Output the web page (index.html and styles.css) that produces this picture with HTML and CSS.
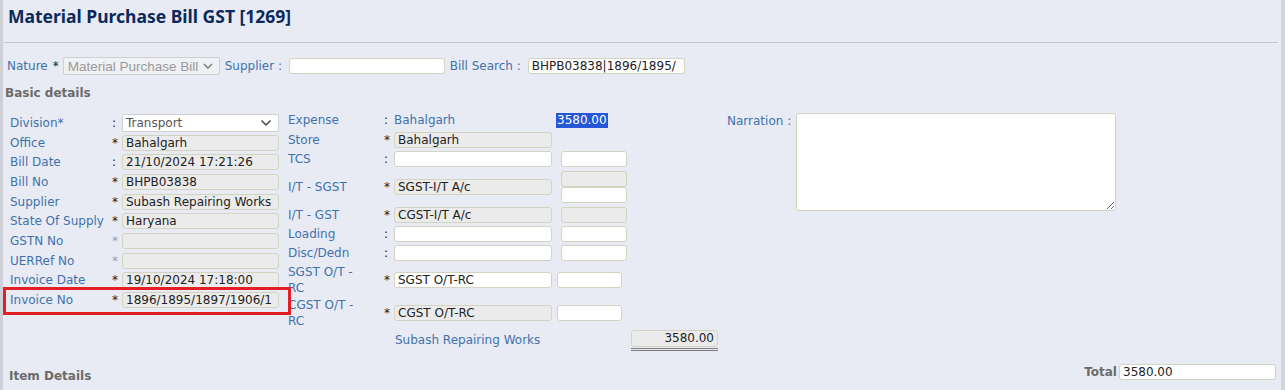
FILE: index.html
```html
<!DOCTYPE html>
<html>
<head>
    <title>Material Purchase Bill GST [1269]</title>
    <link rel="stylesheet" href="styles.css">
</head>
<body>
    <div class="page">
        <h1 class="title">Material Purchase Bill GST [1269]</h1>
        <hr class="rule">

        <div class="toprow">
            <span class="lbl">Nature</span><span class="req">*</span>
            <div class="fsel nature">
                <span>Material Purchase Bill</span>
                <svg width="12" height="8" viewBox="0 0 12 8"><path d="M2 2l4 4 4-4" fill="none" stroke="#777" stroke-width="1.4"/></svg>
            </div>
            <span class="lbl supl">Supplier :</span>
            <input class="txt w156" type="text">
            <span class="lbl bsrch">Bill Search :</span>
            <input class="txt w157" type="text" value="BHPB03838|1896/1895/">
        </div>

        <div class="section">Basic details</div>

        <div class="details">
            <!-- left column -->
            <div class="left">
                <span class="lbl">Division*</span><span class="sep">:</span>
                <div class="fsel division">
                    <span>Transport</span>
                    <svg width="12" height="8" viewBox="0 0 12 8"><path d="M1.5 1.5l4.5 4.5 4.5-4.5" fill="none" stroke="#444" stroke-width="1.5"/></svg>
                </div>

                <span class="lbl">Office</span><span class="sep">*</span>
                <input class="txt ro" type="text" value="Bahalgarh" readonly>

                <span class="lbl">Bill Date</span><span class="sep">:</span>
                <input class="txt ro" type="text" value="21/10/2024 17:21:26" readonly>

                <span class="lbl">Bill No</span><span class="sep">*</span>
                <input class="txt ro" type="text" value="BHPB03838" readonly>

                <span class="lbl">Supplier</span><span class="sep">*</span>
                <input class="txt ro" type="text" value="Subash Repairing Works" readonly>

                <span class="lbl">State Of Supply</span><span class="sep">*</span>
                <input class="txt ro" type="text" value="Haryana" readonly>

                <span class="lbl">GSTN No</span><span class="sep light">*</span>
                <input class="txt ro" type="text" readonly>

                <span class="lbl">UERRef No</span><span class="sep light">*</span>
                <input class="txt ro" type="text" readonly>

                <span class="lbl">Invoice Date</span><span class="sep">*</span>
                <input class="txt ro" type="text" value="19/10/2024 17:18:00" readonly>

                <span class="lbl">Invoice No</span><span class="sep">*</span>
                <input class="txt ro" type="text" value="1896/1895/1897/1906/1" readonly>
            </div>

            <!-- middle column -->
            <div class="mid">
                <div class="midgrid">
                    <span class="lbl top">Expense</span><span class="sep top">:</span>
                    <span class="lbl top">Bahalgarh</span><span></span>
                    <span class="sel-amt">3580.00</span>

                    <span class="lbl">Store</span><span class="sep">*</span>
                    <input class="txt ro" type="text" value="Bahalgarh" readonly><span></span><span></span>

                    <span class="lbl">TCS</span><span class="sep">:</span>
                    <input class="txt" type="text"><span></span>
                    <input class="txt" type="text">

                    <span class="lbl">I/T - SGST</span><span class="sep">*</span>
                    <input class="txt ro" type="text" value="SGST-I/T A/c" readonly><span></span>
                    <div class="stack">
                        <input class="txt ro" type="text" readonly>
                        <input class="txt" type="text">
                    </div>

                    <span class="lbl">I/T - GST</span><span class="sep">*</span>
                    <input class="txt ro" type="text" value="CGST-I/T A/c" readonly><span></span>
                    <input class="txt ro" type="text" readonly>

                    <span class="lbl">Loading</span><span class="sep">:</span>
                    <input class="txt" type="text"><span></span>
                    <input class="txt" type="text">

                    <span class="lbl">Disc/Dedn</span><span class="sep">:</span>
                    <input class="txt" type="text"><span></span>
                    <input class="txt" type="text">

                    <span class="lbl wrap">SGST O/T - RC</span><span class="sep">*</span>
                    <input class="txt" type="text" value="SGST O/T-RC"><span></span>
                    <input class="txt shift" type="text">

                    <span class="lbl wrap">CGST O/T - RC</span><span class="sep">*</span>
                    <input class="txt ro" type="text" value="CGST O/T-RC" readonly><span></span>
                    <input class="txt shift" type="text">
                </div>
                <div class="sumrow">
                    <span class="lbl sumname">Subash Repairing Works</span>
                    <div class="sumbox"><input class="txt ro num" type="text" value="3580.00" readonly></div>
                </div>
            </div>

            <!-- narration -->
            <div class="narr">
                <span class="lbl">Narration :</span>
                <textarea class="narrbox"></textarea>
            </div>
        </div>

        <div class="bottom">
            <div class="section">Item Details</div>
            <div class="total">
                <span class="totlbl">Total</span>
                <input class="txt w157" type="text" value="3580.00">
            </div>
        </div>

        <div class="mark"></div>
    </div>
</body>
</html>
```

FILE: styles.css
```css
* {
    box-sizing: border-box;
}
body {
    margin: 0;
    background-color: #e8ebf3;
    font-family: "DejaVu Sans", Verdana, sans-serif;
    font-size: 12px;
    color: #222;
    overflow: hidden;
}
.page {
    position: relative;
    width: 1285px;
    height: 390px;
    border-left: 3px solid #cdd0d6;
    border-right: 4px solid #d3d5da;
}
.title {
    margin: 0;
    height: 42px;
    padding: 4px 0 0 5px;
    font-family: "Noto Sans", sans-serif;
    font-size: 17.5px;
    font-weight: bold;
    color: #0b2a5b;
}
.rule {
    margin: 0 3px 0 1px;
    border: 0;
    border-top: 1px solid #c3c5ca;
}
.lbl {
    color: #3f72ad;
    white-space: nowrap;
}
.req {
    margin: 0 4px 0 5px;
}
.txt {
    height: 16px;
    padding: 0 3px;
    border: 1px solid #d3d4bf;
    border-radius: 3px;
    background-color: #fff;
    font-family: "DejaVu Sans", Verdana, sans-serif;
    font-size: 12px;
    color: #222;
    outline: none;
}
.txt.ro {
    background-color: #ebebeb;
}
.w156 {
    width: 156px;
}
.w157 {
    width: 157px;
}

/* top row */
.toprow {
    display: flex;
    align-items: center;
    height: 18px;
    margin-top: 14px;
    padding-left: 4px;
}
.toprow .txt {
    margin-right: 5px;
}
.supl {
    width: 64px;
}
.bsrch {
    width: 78px;
}
.fsel {
    display: flex;
    align-items: center;
    justify-content: space-between;
    border: 1px solid #cfd0d4;
    border-radius: 2px;
}
.nature {
    width: 157px;
    height: 18px;
    margin-right: 5px;
    padding: 0 5px 0 4px;
    background-color: #f0f1f4;
    font-family: "Liberation Sans", Arial, sans-serif;
    font-size: 13.5px;
    color: #9a9a9a;
}
.division {
    width: 157px;
    height: 18px;
    padding: 0 6px 0 3px;
    background-color: #fff;
    color: #555;
}

.section {
    height: 16px;
    margin: 10px 0 0 2px;
    line-height: 16px;
    font-weight: bold;
    color: #6b6b6b;
}

/* basic details */
.details {
    display: flex;
    align-items: flex-start;
    margin-top: 12px;
    padding-left: 7px;
}
.left {
    display: grid;
    grid-template-columns: 102px 10px 157px;
    grid-auto-rows: 19.7px;
    align-items: center;
}
.sep {
    color: #222;
}
.sep.light {
    color: #8aa3c4;
}
.left .txt {
    width: 157px;
}
.mid {
    margin-left: 9px;
    width: 339px;
}
.midgrid {
    display: grid;
    grid-template-columns: 96px 10px 158px 9px 66px;
    grid-template-rows: 17px 19.5px 19.5px 36px 19px 19.5px 19.5px 33px 33px;
    align-items: center;
}
.midgrid .lbl {
    white-space: normal;
    line-height: 16px;
}
.midgrid .top {
    align-self: start;
    line-height: 15px;
}
.midgrid .wrap {
    max-width: 80px;
}
.midgrid .txt {
    width: 100%;
}
.midgrid .txt.shift {
    width: 65px;
    margin-left: -4px;
}
.sel-amt {
    align-self: start;
    justify-self: start;
    margin-left: -5px;
    padding: 0 1px;
    line-height: 15px;
    background-color: #2557d6;
    color: #fff;
}
.stack {
    display: flex;
    flex-direction: column;
}
.stack .txt {
    height: 16px;
}
.sumrow {
    display: flex;
    align-items: center;
    height: 22px;
    padding-left: 107px;
}
.sumname {
    flex-shrink: 0;
    width: 236px;
}
.sumbox {
    flex-shrink: 0;
    width: 87px;
    padding-bottom: 1px;
    border-bottom: 3px double #7c7c7c;
}
.sumbox .txt {
    width: 87px;
    height: 17px;
}
.num {
    text-align: right;
}

/* narration */
.narr {
    display: flex;
    align-items: flex-start;
    margin-left: 100px;
}
.narr .lbl {
    width: 69px;
    padding-top: 1px;
}
.narrbox {
    width: 320px;
    height: 98px;
    border: 1px solid #d3d4bf;
    border-radius: 2px;
    background-color: #fff;
    outline: none;
}

/* bottom */
.bottom {
    display: flex;
    justify-content: space-between;
    margin-top: 8px;
    padding-left: 4px;
}
.bottom .section {
    margin-top: 9px;
}
.total {
    display: flex;
    align-items: center;
    margin-right: 5px;
}
.totlbl {
    margin-right: 2px;
    font-weight: bold;
    color: #6b6b6b;
}

/* annotation box */
.mark {
    position: absolute;
    left: 0;
    top: 287px;
    width: 288px;
    height: 28px;
    border: 3px solid #e31e24;
}
```
